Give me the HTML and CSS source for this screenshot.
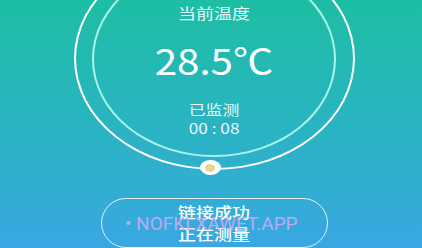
FILE: index.html
```html
<!DOCTYPE html>
<html lang="zh">
<head>
<meta charset="utf-8">
<link rel="stylesheet" href="styles.css">
</head>
<body>
<div class="screen">
  <div class="dial">
    <div class="ring">
      <p class="label">当前温度</p>
      <p class="temp">28.5℃</p>
      <p class="sub">已监测</p>
      <p class="time">00 : 08</p>
    </div>
    <span class="knob"></span>
  </div>
  <div class="btn">
    <span class="btn-line">链接成功</span>
    <span class="btn-line">正在测量</span>
  </div>
  <div class="watermark">• NOFKLXAWET.APP</div>
</div>
</body>
</html>
```

FILE: styles.css
```css
html, body {
  margin: 0;
  padding: 0;
}
body {
  width: 422px;
  height: 248px;
  overflow: hidden;
  font-family: "Noto Sans CJK SC", "Noto Sans", sans-serif;
  color: #fff;
}
.screen {
  position: relative;
  height: 248px;
  box-sizing: border-box;
  padding-left: 6px;
  display: flex;
  flex-direction: column;
  align-items: center;
  overflow: hidden;
  background: linear-gradient(180deg, #1dbea4 0%, #2bb3c4 55%, #3aa7e3 100%);
}
.dial {
  position: relative;
  flex-shrink: 0;
  width: 281px;
  height: 223px;
  margin-top: -53px;
  box-sizing: border-box;
  border: 2.5px solid #fff;
  border-radius: 50%;
  display: flex;
  align-items: center;
  justify-content: center;
}
.ring {
  width: 244px;
  height: 196px;
  box-sizing: border-box;
  border: 2px solid rgba(195, 255, 240, 0.85);
  border-radius: 50%;
  display: flex;
  flex-direction: column;
  align-items: center;
  padding-top: 40px;
}
.ring p {
  margin: 0;
  white-space: nowrap;
}
.label {
  font-size: 15px;
  line-height: 20px;
  transform: scaleX(1.2);
  color: rgba(255, 255, 255, 0.92);
}
.temp {
  margin-top: 16px !important;
  font-size: 36px;
  line-height: 40px;
  transform: scaleX(1.12);
}
.sub {
  margin-top: 21px !important;
  font-size: 14px;
  line-height: 18px;
  transform: scaleX(1.2);
  color: rgba(255, 255, 255, 0.92);
}
.time {
  margin-top: 1px !important;
  font-size: 15px;
  line-height: 18px;
  transform: scaleX(1.15);
  color: rgba(255, 255, 255, 0.92);
}
.knob {
  position: absolute;
  left: 124px;
  top: 211px;
  width: 21px;
  height: 15px;
  border-radius: 50%;
  background: #fff;
  display: flex;
  align-items: center;
  justify-content: center;
}
.knob::after {
  content: "";
  width: 10px;
  height: 8px;
  border-radius: 50%;
  background: #e8d58c;
}
.btn {
  flex-shrink: 0;
  margin-top: 28px;
  width: 227px;
  height: 50px;
  box-sizing: border-box;
  border: 1.5px solid rgba(255, 255, 255, 0.85);
  border-radius: 25px;
  display: flex;
  flex-direction: column;
  align-items: center;
  justify-content: center;
}
.btn-line {
  font-size: 15px;
  line-height: 22px;
  font-weight: 500;
  transform: scaleX(1.2);
  white-space: nowrap;
}
.watermark {
  position: absolute;
  left: 125px;
  top: 211px;
  font-family: Roboto, "Liberation Sans", sans-serif;
  font-size: 19px;
  line-height: 26px;
  color: rgba(212, 172, 240, 0.85);
  white-space: nowrap;
}
```
